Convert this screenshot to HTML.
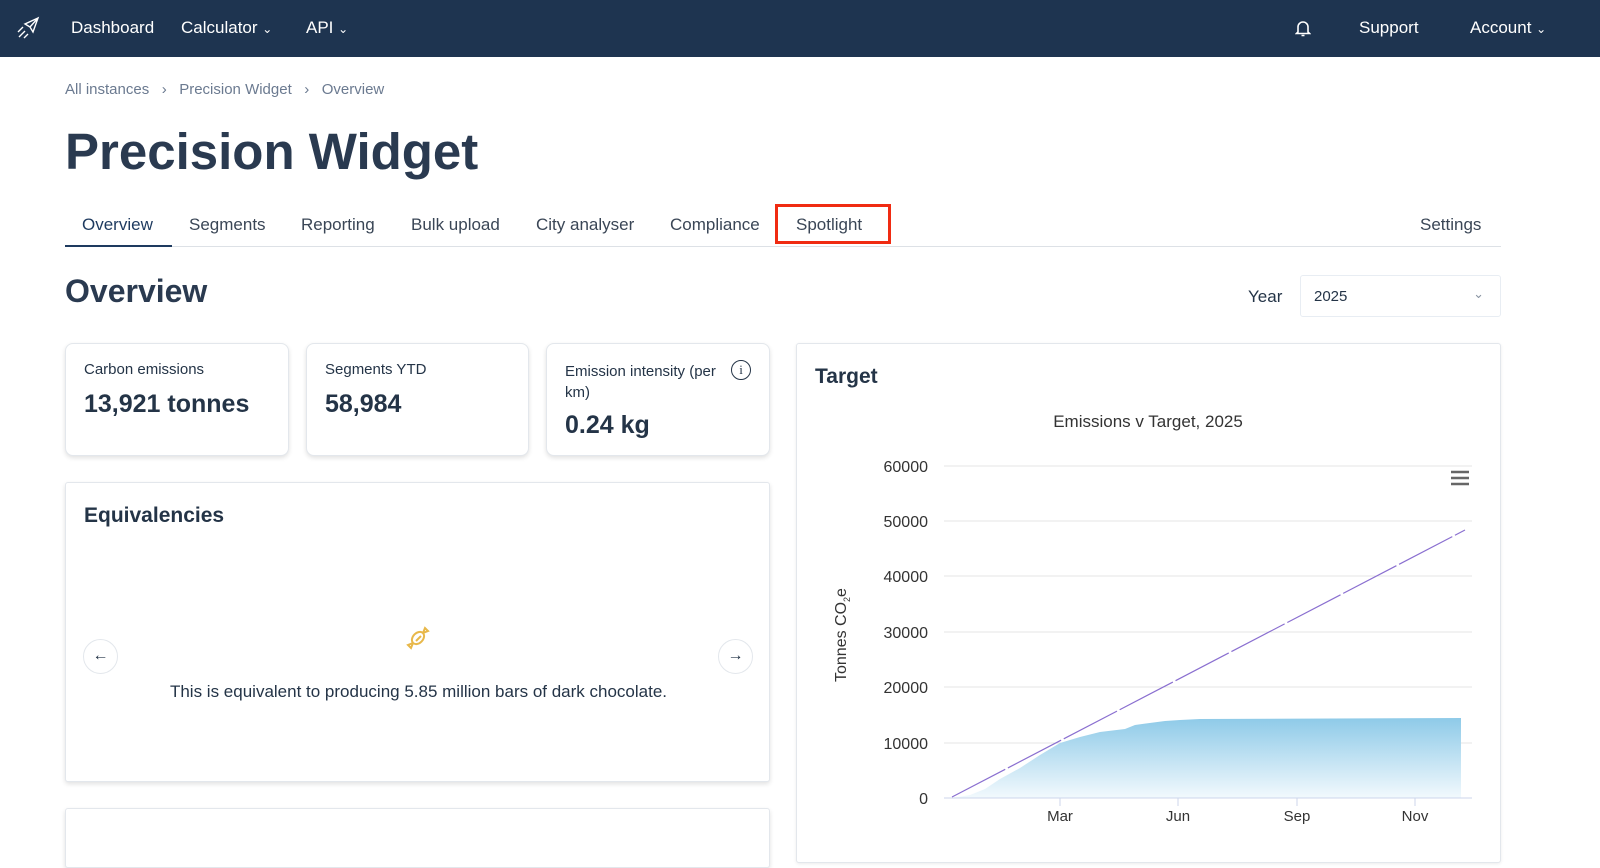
<!DOCTYPE html>
<html><head><meta charset="utf-8"><style>
*{box-sizing:border-box;margin:0;padding:0}
body{width:1600px;height:849px;overflow:hidden;background:#fff;font-family:"Liberation Sans",sans-serif;color:#243447;position:relative}
.nav{position:absolute;left:0;top:0;width:1600px;height:57px;background:#1e3450;color:#fff;font-size:17px}
.nav span{position:absolute;top:18px}
.abs{position:absolute}
.card{position:absolute;background:#fff;border:1px solid #e3e7ec;border-radius:8px;box-shadow:0 2px 5px rgba(0,0,0,.12)}
.tab{position:absolute;top:215px;font-size:17px;color:#3a4656}
</style></head><body>
<div class="nav">
<svg class="abs" style="left:16px;top:16px" width="24" height="24" viewBox="0 0 24 24" fill="none" stroke="#fff" stroke-width="1.4"><path d="M22 2L9 8l5 3 3 5zM14 11l8-9M2 16l5-5M3 21l6-6M8 22l4-4"/></svg>
<span style="left:71px">Dashboard</span>
<span style="left:181px">Calculator <small style="font-size:12px">&#8964;</small></span>
<span style="left:306px">API <small style="font-size:12px">&#8964;</small></span>
<svg class="abs" style="left:1295px;top:19px" width="16" height="18" viewBox="0 0 16 18" fill="none" stroke="#fff" stroke-width="1.6"><path d="M3 13V8a5 5 0 0110 0v5l1.5 1.5h-13zM6.5 16.5h3"/></svg>
<span style="left:1359px">Support</span>
<span style="left:1470px">Account <small style="font-size:12px">&#8964;</small></span>
</div>
<div class="abs" style="left:65px;top:81px;font-size:15px;color:#6b7a90">All instances &nbsp;&nbsp;&#8250;&nbsp;&nbsp; Precision Widget &nbsp;&nbsp;&#8250;&nbsp;&nbsp; Overview</div>
<div class="abs" style="left:65px;top:122px;font-size:51px;font-weight:bold;color:#2a3a50">Precision Widget</div>
<div class="tab" style="left:82px;color:#1e3a5f">Overview</div>
<div class="tab" style="left:189px">Segments</div>
<div class="tab" style="left:301px">Reporting</div>
<div class="tab" style="left:411px">Bulk upload</div>
<div class="tab" style="left:536px">City analyser</div>
<div class="tab" style="left:670px">Compliance</div>
<div class="tab" style="left:796px">Spotlight</div>
<div class="tab" style="left:1420px">Settings</div>
<div class="abs" style="left:775px;top:204px;width:116px;height:40px;border:3px solid #f02b12"></div>
<div class="abs" style="left:65px;top:246px;width:1436px;height:1px;background:#dde1e6"></div>
<div class="abs" style="left:65px;top:245px;width:107px;height:2px;background:#1e3a5f"></div>
<div class="abs" style="left:65px;top:273px;font-size:32px;font-weight:bold;color:#2a3a50">Overview</div>
<div class="abs" style="left:1248px;top:287px;font-size:17px">Year</div>
<div class="abs" style="left:1300px;top:275px;width:201px;height:42px;border:1px solid #e8edf3;border-radius:3px;font-size:15px;padding:12px 13px">2025<span style="position:absolute;right:16px;top:10px;color:#8a95a3;font-size:13px">&#8964;</span></div>
<div class="card" style="left:65px;top:343px;width:224px;height:113px"><div class="abs" style="left:18px;top:17px;font-size:15px">Carbon emissions</div><div class="abs" style="left:18px;top:46px;font-size:25px;font-weight:bold">13,921 tonnes</div></div>
<div class="card" style="left:306px;top:343px;width:223px;height:113px"><div class="abs" style="left:18px;top:17px;font-size:15px">Segments YTD</div><div class="abs" style="left:18px;top:46px;font-size:25px;font-weight:bold">58,984</div></div>
<div class="card" style="left:546px;top:343px;width:224px;height:113px"><div class="abs" style="left:18px;top:17px;font-size:15px;line-height:21px;width:160px">Emission intensity (per km)</div><div class="abs" style="left:184px;top:16px;width:20px;height:20px;border:1.5px solid #243447;border-radius:50%;font-size:13px;text-align:center;line-height:17px;font-family:'Liberation Serif',serif">i</div><div class="abs" style="left:18px;top:67px;font-size:25px;font-weight:bold">0.24 kg</div></div>
<div class="card" style="left:65px;top:482px;width:705px;height:300px;border-radius:3px">
<div class="abs" style="left:18px;top:21px;font-size:21px;font-weight:bold">Equivalencies</div>
<div class="abs" style="left:17px;top:156px;width:35px;height:35px;border:1px solid #e3e7ec;border-radius:50%;text-align:center;line-height:32px;font-size:16px">&#8592;</div>
<div class="abs" style="left:652px;top:156px;width:35px;height:35px;border:1px solid #e3e7ec;border-radius:50%;text-align:center;line-height:32px;font-size:16px">&#8594;</div>
<svg class="abs" style="left:339px;top:142px" width="26" height="26" viewBox="0 0 26 26" fill="none" stroke="#e8b84a" stroke-width="2"><ellipse cx="13" cy="13" rx="5" ry="7" transform="rotate(45 13 13)"/><path d="M18 8l2-5 3 3-5 2M8 18l-5 2 3 3 2-5M11 16l5-5"/></svg>
<div class="abs" style="left:0;width:705px;top:199px;text-align:center;font-size:17px">This is equivalent to producing 5.85 million bars of dark chocolate.</div>
</div>
<div class="card" style="left:65px;top:808px;width:705px;height:60px;border-radius:3px"></div>
<div class="card" style="left:796px;top:343px;width:705px;height:520px;border-radius:3px;box-shadow:0 1px 3px rgba(0,0,0,.08)">
<div class="abs" style="left:18px;top:21px;font-size:21px;font-weight:bold">Target</div>
</div>
<svg class="abs" style="left:796px;top:400px" width="705" height="449" viewBox="796 400 705 449" font-family="Liberation Sans" fill="#333">
<defs><linearGradient id="g" x1="0" y1="0" x2="0" y2="1"><stop offset="0" stop-color="#8ecae8"/><stop offset="1" stop-color="#f2f9fd"/></linearGradient></defs>
<text x="1148" y="427" text-anchor="middle" font-size="17">Emissions v Target, 2025</text>
<g stroke="#e6e6e6"><path d="M944 466H1472M944 521H1472M944 576H1472M944 632H1472M944 687H1472M944 743H1472"/></g>
<path d="M952 798L970 795 985 789 1000 779 1020 768 1040 755 1060 743 1080 737 1100 732 1125 729 1135 725 1165 721 1180 720 1200 719 1461 718V798Z" fill="url(#g)"/>
<path d="M944 798H1472" stroke="#ccd6eb"/>
<g stroke="#ccd6eb"><path d="M1060 798v8M1178 798v8M1297 798v8M1415 798v8"/></g>
<path d="M952 797L1465 530" stroke="#8a6fd0" stroke-width="1.2" stroke-dasharray="60 3"/>
<g font-size="16" text-anchor="end" fill="#333"><text x="928" y="472">60000</text><text x="928" y="527">50000</text><text x="928" y="582">40000</text><text x="928" y="638">30000</text><text x="928" y="693">20000</text><text x="928" y="749">10000</text><text x="928" y="804">0</text></g>
<g font-size="15" text-anchor="middle"><text x="1060" y="821">Mar</text><text x="1178" y="821">Jun</text><text x="1297" y="821">Sep</text><text x="1415" y="821">Nov</text></g>
<text transform="translate(846 682) rotate(-90)" font-size="16">Tonnes CO<tspan font-size="9" dy="4">2</tspan><tspan dy="-4">e</tspan></text>
<g stroke="#666" stroke-width="2.5"><path d="M1451 472h18M1451 478h18M1451 484h18"/></g>
</svg>
</body></html>
